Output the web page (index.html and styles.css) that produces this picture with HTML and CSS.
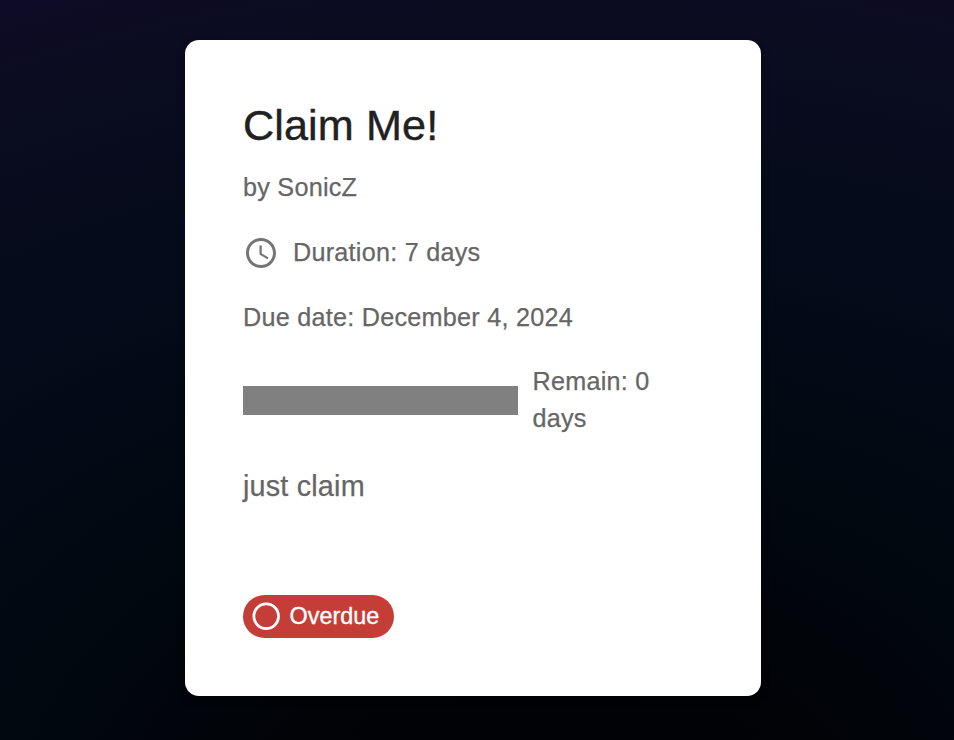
FILE: index.html
```html
<!DOCTYPE html>
<html lang="en">
<head>
<meta charset="utf-8">
<title>Claim Me!</title>
<link rel="stylesheet" href="styles.css">
</head>
<body>
<main class="card">
  <h1 class="title">Claim Me!</h1>
  <p class="text author">by SonicZ</p>
  <div class="text duration">
    <svg class="clock" viewBox="0 0 24 24"><path d="M11.99 2C6.47 2 2 6.48 2 12s4.47 10 9.99 10C17.52 22 22 17.52 22 12S17.52 2 11.99 2zM12 20c-4.42 0-8-3.58-8-8s3.58-8 8-8 8 3.58 8 8-3.58 8-8 8z"/><path d="M12.5 7H11v6l5.25 3.15.75-1.23-4.5-2.67z"/></svg>
    <span>Duration: 7 days</span>
  </div>
  <p class="text due">Due date: December 4, 2024</p>
  <div class="remain">
    <div class="bar"></div>
    <p class="text remain-label">Remain: 0 days</p>
  </div>
  <p class="text description">just claim</p>
  <div class="chip">
    <svg class="ring" viewBox="0 0 28 28"><circle cx="14.2" cy="14.2" r="12.3"/></svg>
    <span class="chip-label">Overdue</span>
  </div>
</main>
</body>
</html>
```

FILE: styles.css
```css
* {
  box-sizing: border-box;
}

body {
  margin: 0;
  height: 740px;
  padding: 40px 0 0 185px;
  overflow: hidden;
  background: radial-gradient(ellipse 1350px 900px at 58% 112%, #000103 0%, #010307 22%, #010810 42%, #040b1a 67%, #0b0c20 91%, #110a2a 106%);
  font-family: "Liberation Sans", Helvetica, Arial, sans-serif;
}

.card {
  width: 576px;
  height: 656px;
  padding: 57px 58px;
  border-radius: 14px;
  background: #fff;
  box-shadow: 0 4px 8px rgba(0, 0, 0, 0.3);
}

.title,
.text {
  margin: 0;
  font-weight: 400;
}

.title {
  font-size: 43.2px;
  line-height: 57px;
  letter-spacing: 0.1px;
  color: #212121;
  -webkit-text-stroke: 0.4px #212121;
}

.text {
  font-size: 25.2px;
  line-height: 36px;
  letter-spacing: 0.25px;
  color: #666;
  -webkit-text-stroke: 0.25px #666;
}

.author {
  margin-top: 15px;
}

.duration {
  display: flex;
  align-items: center;
  height: 36px;
  margin-top: 29px;
}

.clock {
  width: 36px;
  height: 36px;
  margin: 2px 14px 0 0;
  flex: none;
  fill: #757575;
}

.due {
  margin-top: 29px;
}

.remain {
  display: flex;
  align-items: center;
  gap: 14.5px;
  margin-top: 28px;
}

.bar {
  width: 275px;
  height: 29px;
  background: #808080;
}

.remain-label {
  width: 140px;
  line-height: 37px;
}

.description {
  margin-top: 28px;
  font-size: 28.8px;
  line-height: 43px;
  letter-spacing: 0.18px;
}

.chip {
  display: flex;
  align-items: center;
  width: 151px;
  height: 43px;
  margin-top: 87px;
  padding-left: 9px;
  border-radius: 22px;
  background: #c43e37;
}

.ring {
  width: 28px;
  height: 28px;
  margin: 0 9.5px 1px 0;
  fill: none;
  stroke: #fff;
  stroke-width: 2.8;
}

.chip-label {
  font-size: 23.4px;
  line-height: 43px;
  color: #fff;
  -webkit-text-stroke: 0.35px #fff;
}
```
